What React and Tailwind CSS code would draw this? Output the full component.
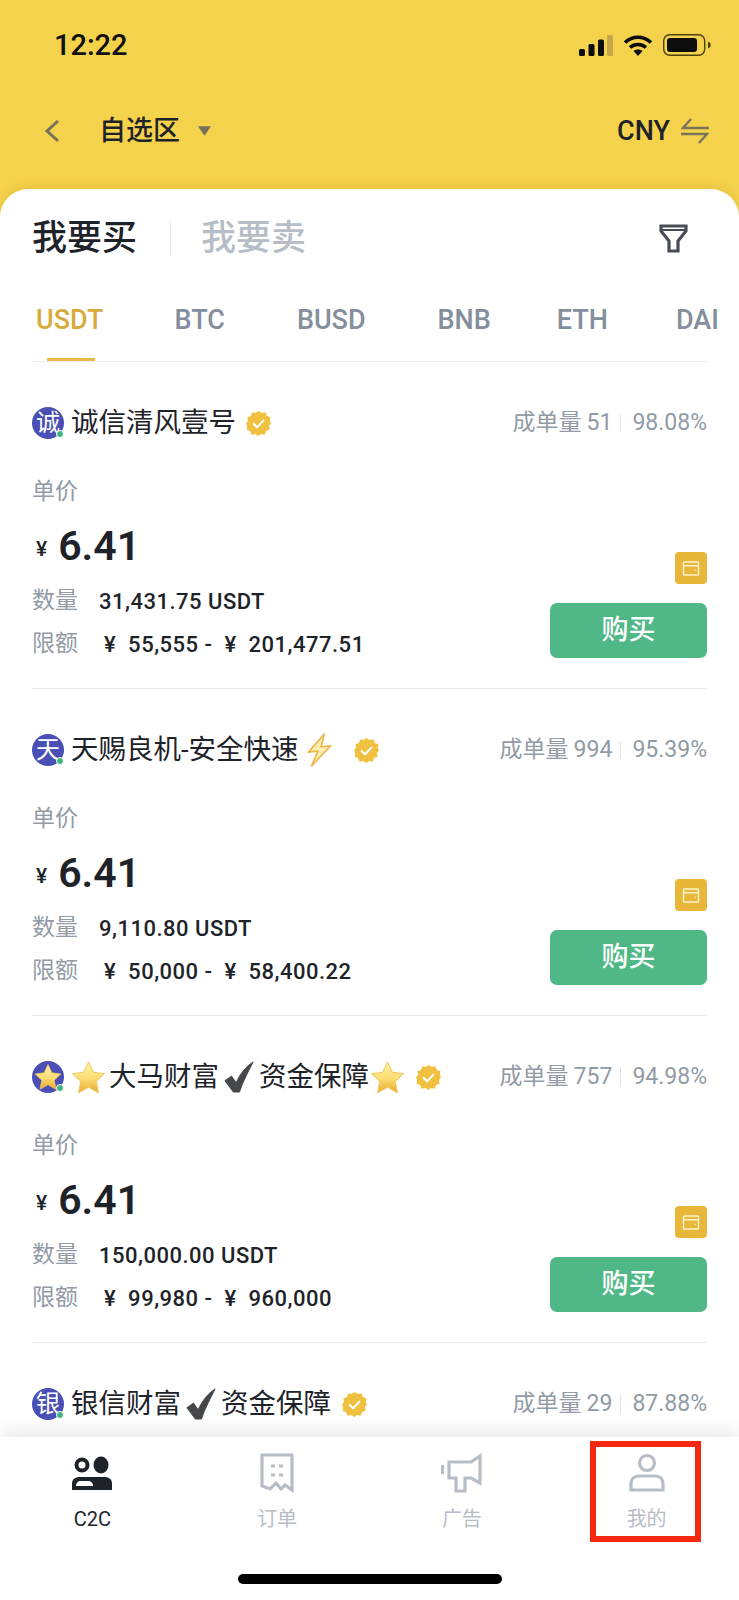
const sans = "font-[family-name:Roboto,'Noto_Sans_CJK_SC',sans-serif]"

function Star({ id, className }) {
  return (
    <svg viewBox="0 0 36 36" className={className}>
      <defs>
        <linearGradient id={id} x1="0" y1="0" x2="0" y2="1">
          <stop offset="0" stopColor="#fff3a8" />
          <stop offset="0.55" stopColor="#fbdc72" />
          <stop offset="1" stopColor="#eba92e" />
        </linearGradient>
      </defs>
      <path
        d="M18 2l5 10.6 11.4 1.5-8.4 8 2.2 11.6L18 28l-10.2 5.700 2.200-11.600-8.400-8L13 12.600z"
        fill={`url(#${id})`}
        stroke="#f0c456"
        strokeWidth="1"
        strokeLinejoin="round"
      />
    </svg>
  )
}

function Tick({ className }) {
  return (
    <svg viewBox="0 0 32 34" className={className}>
      <path
        d="M1 21l7-5 5 7C17 14 23 6 31 1 26 11 20 22 16.500 33H10z"
        fill="#45474b"
        stroke="#45474b"
        strokeWidth="1"
        strokeLinejoin="round"
      />
    </svg>
  )
}

function Bolt({ className }) {
  return (
    <svg viewBox="0 0 24 32" className={className}>
      <path d="M17 1L2 18l9-1-6 14L23 12l-9 1z" fill="#fdeeb4" stroke="#eeb447" strokeWidth="1.500" strokeLinejoin="round" />
    </svg>
  )
}

function Verified({ className }) {
  return (
    <svg viewBox="0 0 26 26" className={className}>
      <path
        d="M13 0l3.400 2.100 3.900-.7 1.500 3.700 3.600 1.500-.6 3.900L26 13l-2.100 2.500.6 3.900-3.600 1.500-1.500 3.700-3.900-.7L13 26l-3.400-2.100-3.900.7-1.500-3.700-3.600-1.500.6-3.900L0 13l2.100-2.500-.6-3.900 3.600-1.500L6.600 1.400l3 .7z"
        fill="#efc13f"
      />
      <path d="M8 13.500l3.500 3.500 6.500-7" fill="none" stroke="#fff" strokeWidth="2.200" strokeLinecap="round" strokeLinejoin="round" />
    </svg>
  )
}

function Avatar({ letter, star }) {
  return (
    <div className="relative flex h-[32px] w-[32px] shrink-0 items-center justify-center rounded-full bg-[#4a4fb5] text-[24px] leading-none text-white">
      {star ? <Star id="avatar-star" className="h-[28px] w-[28px]" /> : letter}
      <span className="absolute bottom-[1px] right-[0px] h-[8px] w-[8px] rounded-full border border-white bg-[#3fb27f]" />
    </div>
  )
}

function Row({ avatar, name, deals, rate, qty, limit }) {
  return (
    <div className="mx-[32px] w-[675px] border-b border-[#e8eaed] pt-[45px] pb-[28px]">
      <div className="flex h-[32px] items-center justify-between">
        <div className="flex items-center">
          {avatar}
          <div className="ml-[7px] flex items-center text-[27.5px] leading-[32px] text-[#1e2329]">{name}</div>
        </div>
        <div className="flex items-center text-[23px] leading-[32px] text-[#929aa5]">
          <span>成单量</span>
          <span className="ml-[5px]">{deals}</span>
          <span className="mr-[11px] ml-[8px] h-[18px] w-px bg-[#dfe2e6]" />
          <span>{rate}</span>
        </div>
      </div>
      {qty && (
        <>
          <div className="mt-[37px] text-[23px] leading-[32px] text-[#929aa5]">单价</div>
          <div className="flex items-end justify-between">
            <div>
              <div className="mt-[10px] flex h-[56px] items-center pl-[4px] text-[#1e2329]">
                <span className="mt-[8px] text-[21px] font-medium">¥</span>
                <span className="ml-[11px] text-[41px] font-semibold leading-[56px]">6.41</span>
              </div>
              <div className="mt-[11px] flex h-[32px] items-center">
                <span className="text-[23px] text-[#929aa5]">数量</span>
                <span className="ml-[21px] text-[22px] font-medium tracking-[0.5px] text-[#1e2329]">{qty}</span>
              </div>
              <div className="mt-[11px] flex h-[32px] items-center">
                <span className="text-[23px] text-[#929aa5]">限额</span>
                <span className="ml-[26px] whitespace-pre text-[22px] font-medium tracking-[0.5px] text-[#1e2329]">{limit}</span>
              </div>
            </div>
            <div className="mb-[2px] flex flex-col items-end gap-[19px]">
              <div className="flex h-[32px] w-[32px] items-center justify-center rounded-[4px] bg-[#e8b639]">
                <svg viewBox="0 0 18 16" className="h-[15px] w-[18px]" fill="none" stroke="#fdf3d0" strokeWidth="1.500">
                  <rect x="1" y="1" width="16" height="14" rx="1" />
                  <path d="M1 5h16M13 10h1" />
                </svg>
              </div>
              <button className="flex h-[55px] w-[157px] items-center justify-center rounded-[7px] bg-[#50b887] text-[27px] font-medium text-white">
                购买
              </button>
            </div>
          </div>
        </>
      )}
    </div>
  )
}

const tabs = [
  { label: 'USDT', gap: 'ml-0' },
  { label: 'BTC', gap: 'ml-[71px]' },
  { label: 'BUSD', gap: 'ml-[72px]' },
  { label: 'BNB', gap: 'ml-[72px]' },
  { label: 'ETH', gap: 'ml-[66px]' },
  { label: 'DAI', gap: 'ml-[68px]' },
]

export default function App() {
  return (
    <div className={`relative flex h-[1600px] w-[739px] flex-col overflow-hidden bg-[#f5d24c] ${sans}`}>
      {/* Status bar */}
      <div className="mt-[25px] flex h-[40px] shrink-0 items-center justify-between pr-[28px] pl-[54px]">
        <span className="text-[29px] font-medium leading-none text-[#111]">12:22</span>
        <div className="flex items-center">
          <svg viewBox="0 0 34 21" className="h-[21px] w-[34px]">
            <rect x="0" y="14" width="6" height="7" rx="1.500" fill="#0d0d0d" />
            <rect x="9.500" y="9" width="6" height="12" rx="1.500" fill="#0d0d0d" />
            <rect x="19" y="4.500" width="6" height="16.500" rx="1.500" fill="#0d0d0d" />
            <rect x="28" y="0" width="6" height="21" rx="1.500" fill="#c4a84a" />
          </svg>
          <svg viewBox="0 0 30 21" className="ml-[10px] h-[21px] w-[30px]" fill="none" stroke="#0d0d0d" strokeWidth="3.600" strokeLinecap="butt">
            <path d="M2 7.500C9.500 0.500 20.500 0.500 28 7.500" />
            <path d="M7 12.500C11.500 8.500 18.500 8.500 23 12.500" />
            <path d="M15 21l-4.500-5c2.500-2 6.500-2 9 0z" fill="#0d0d0d" stroke="none" />
          </svg>
          <svg viewBox="0 0 48 22" className="ml-[10px] h-[22px] w-[48px]">
            <rect x="0.700" y="0.700" width="41" height="20.600" rx="6" fill="none" stroke="#4b4213" strokeWidth="1.400" />
            <rect x="4" y="4" width="30" height="14" rx="3" fill="#0d0d0d" />
            <path d="M45 7.500c2 .8 2.700 2 2.700 3.500s-.7 2.700-2.700 3.500z" fill="#4b4213" />
          </svg>
        </div>
      </div>

      {/* Nav */}
      <div className="mt-[46px] flex h-[40px] shrink-0 items-center justify-between pr-[30px] pl-[44px]">
        <div className="flex items-center">
          <svg viewBox="0 0 16 24" className="h-[24px] w-[16px]" fill="none" stroke="#77705a" strokeWidth="3">
            <path d="M14 2L3 12l11 10" />
          </svg>
          <span className="ml-[39px] text-[27px] font-medium leading-none text-[#1e2329]">自选区</span>
          <svg viewBox="0 0 14 10" className="ml-[18px] h-[10px] w-[13px]">
            <path d="M0 0h14L7 10z" fill="#77705a" />
          </svg>
        </div>
        <div className="flex items-center">
          <span className="text-[27px] font-medium leading-none text-[#1e2329]">CNY</span>
          <svg viewBox="0 0 28 26" className="ml-[11px] h-[26px] w-[28px]" fill="none" stroke="#79745c" strokeWidth="2.400">
            <path d="M28 10H2L10 1M0 16h26l-8 9" />
          </svg>
        </div>
      </div>

      {/* Sheet */}
      <div className="mt-[38px] flex min-h-0 flex-1 flex-col overflow-hidden rounded-t-[28px] bg-white shadow-[0_-3px_8px_rgba(170,130,20,0.2)]">
        <div className="mt-[29px] flex h-[40px] shrink-0 items-center justify-between pr-[51px] pl-[32px]">
          <div className="flex items-center">
            <span className="text-[35px] font-medium leading-none text-[#1e2329]">我要买</span>
            <span className="ml-[33px] h-[34px] w-px bg-[#e8eaed]" />
            <span className="ml-[30px] text-[35px] font-medium leading-none text-[#b7bdc6]">我要卖</span>
          </div>
          <svg viewBox="0 0 29 29" className="h-[29px] w-[29px]" fill="none" stroke="#474d57" strokeWidth="3.200" strokeLinejoin="miter">
            <path d="M2 2h25v5l-8 10v10h-9V17L2 7z" />
            <path d="M2 6h25" strokeWidth="2" />
          </svg>
        </div>

        <div className="mx-[32px] mt-[41px] h-[63px] shrink-0 border-b border-[#eceef0]">
          <div className="flex pl-[4px]">
            {tabs.map((t, i) => (
              <div
                key={t.label}
                className={`relative h-[62px] whitespace-nowrap text-[27px] font-medium leading-[42px] ${t.gap} ${i === 0 ? 'text-[#d6ab3c]' : 'text-[#848e9c]'}`}
              >
                {t.label}
                {i === 0 && <span className="absolute bottom-0 left-[11px] h-[3px] w-[48px] bg-[#e4b94a]" />}
              </div>
            ))}
          </div>
        </div>

        <div className="min-h-0 flex-1 overflow-hidden">
          <Row
            avatar={<Avatar letter="诚" />}
            name={
              <>
                诚信清风壹号
                <Verified className="ml-[10px] h-[25px] w-[25px]" />
              </>
            }
            deals="51"
            rate="98.08%"
            qty="31,431.75 USDT"
            limit="¥  55,555 -  ¥  201,477.51"
          />
          <Row
            avatar={<Avatar letter="天" />}
            name={
              <>
                天赐良机-安全快速
                <Bolt className="ml-[7px] h-[34px] w-[26px]" />
                <Verified className="ml-[22px] h-[25px] w-[25px]" />
              </>
            }
            deals="994"
            rate="95.39%"
            qty="9,110.80 USDT"
            limit="¥  50,000 -  ¥  58,400.22"
          />
          <Row
            avatar={<Avatar star />}
            name={
              <>
                <Star id="star-a" className="h-[35px] w-[35px]" />
                <span className="ml-[3px]">大马财富</span>
                <Tick className="ml-[4px] h-[32px] w-[32px]" />
                <span className="ml-[4px]">资金保障</span>
                <Star id="star-b" className="ml-[1px] h-[35px] w-[35px]" />
                <Verified className="ml-[11px] h-[25px] w-[25px]" />
              </>
            }
            deals="757"
            rate="94.98%"
            qty="150,000.00 USDT"
            limit="¥  99,980 -  ¥  960,000"
          />
          <Row
            avatar={<Avatar letter="银" />}
            name={
              <>
                银信财富
                <Tick className="ml-[4px] h-[32px] w-[32px]" />
                <span className="ml-[4px]">资金保障</span>
                <Verified className="ml-[11px] h-[25px] w-[25px]" />
              </>
            }
            deals="29"
            rate="87.88%"
          />
        </div>
      </div>

      {/* Bottom tabs */}
      <div className="relative z-10 h-[163px] shrink-0 bg-white shadow-[0_-6px_18px_rgba(0,0,0,0.09)]">
        <div className="grid grid-cols-4 pt-[16px]">
          <div className="flex flex-col items-center">
            <svg viewBox="0 0 40 40" className="h-[40px] w-[40px]">
              <circle cx="10" cy="12" r="5.500" fill="#fff" stroke="#1e2329" strokeWidth="4" />
              <ellipse cx="29" cy="12" rx="7.500" ry="8.500" fill="#1e2329" />
              <path d="M0 37v-6c0-5 3-7 8-7h24c5 0 8 2 8 7v6z" fill="#1e2329" />
              <path d="M4 33c0-3 2-5 5-5h7c3 0 5 2 5 5z" fill="#fff" />
            </svg>
            <span className="mt-[11px] text-[20px] leading-[30px] text-[#1e2329]">C2C</span>
          </div>
          <div className="flex flex-col items-center">
            <svg viewBox="0 0 34 40" className="h-[40px] w-[34px]" fill="none" stroke="#b7bdc6" strokeWidth="3.200">
              <path d="M2 2h30v35l-7-5-4 4-5-6-6 6-8-3z" strokeLinejoin="miter" />
              <path d="M11 13h4M19 13h4M11 22h4M19 22h4" strokeWidth="3" />
            </svg>
            <span className="mt-[11px] text-[20px] leading-[30px] text-[#b7bdc6]">订单</span>
          </div>
          <div className="flex flex-col items-center">
            <svg viewBox="0 0 42 40" className="h-[40px] w-[42px]" fill="none" stroke="#b7bdc6" strokeWidth="3.200">
              <path d="M1.500 12v9" />
              <path d="M8 9h22l9-6v27l-9-5h-6v13h-9V25h-7z" strokeLinejoin="miter" />
            </svg>
            <span className="mt-[11px] text-[20px] leading-[30px] text-[#b7bdc6]">广告</span>
          </div>
          <div className="flex flex-col items-center">
            <svg viewBox="0 0 36 40" className="h-[40px] w-[36px]" fill="none" stroke="#b7bdc6" strokeWidth="3.200">
              <circle cx="18" cy="10" r="7.500" />
              <path d="M2 37v-6c0-5 3-8 8-8h16c5 0 8 3 8 8v6z" />
            </svg>
            <span className="mt-[11px] text-[20px] leading-[30px] text-[#b7bdc6]">我的</span>
          </div>
        </div>
        <div className="absolute top-[137px] left-[238px] h-[10px] w-[264px] rounded-full bg-black" />
        {/* Red annotation box */}
        <div className="absolute top-[4px] left-[590px] h-[101px] w-[111px] border-[6px] border-[#f5290f]" />
      </div>
    </div>
  )
}
